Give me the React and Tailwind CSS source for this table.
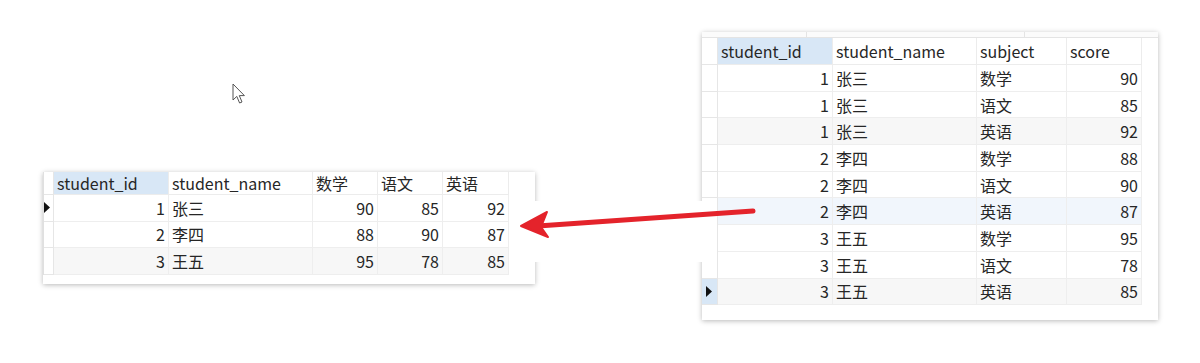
import React from "react";

const FONT = { fontFamily: '"Noto Sans CJK SC", "Noto Sans", sans-serif' };

function Tri() {
  return (
    <svg width="6" height="11" viewBox="0 0 6 11" className="block">
      <polygon points="0,0 6,5.5 0,11" fill="#111" />
    </svg>
  );
}

function Table({ cols, header, rows, headerH, rowH, indW, indPad, blueHeaderIdx, triRow, blueInd }) {
  const tmpl = [indW, ...cols.map((c) => c.w)].map((w) => w + "px").join(" ");
  return (
    <div className="grid" style={{ gridTemplateColumns: tmpl }}>
      <div className="border-r border-b border-[#e6e6e6] bg-white" style={{ height: headerH }} />
      {header.map((h, i) => (
        <div
          key={i}
          className={
            "flex items-center pl-[3px] border-r border-b border-[#ececec] " +
            (i === blueHeaderIdx ? "bg-[#d8e7f6]" : "bg-white")
          }
          style={{ height: headerH }}
        >
          {h}
        </div>
      ))}
      {rows.map((r, ri) => (
        <React.Fragment key={ri}>
          <div
            className={
              "flex items-center border-r border-b border-[#e6e6e6] " +
              (indPad ? "pl-[4px] " : "pl-0 ") +
              (ri === blueInd ? "bg-[#d8e7f6]" : "bg-white")
            }
            style={{ height: rowH }}
          >
            {ri === triRow ? <Tri /> : null}
          </div>
          {r.cells.map((c, ci) => (
            <div
              key={ci}
              className={
                "flex items-center border-r border-b border-[#eeeeee] " +
                (cols[ci].right ? "justify-end pr-[3px] " : "pl-[3px] ") +
                r.bg
              }
              style={{ height: rowH }}
            >
              {c}
            </div>
          ))}
        </React.Fragment>
      ))}
    </div>
  );
}

export default function App() {
  const leftCols = [
    { w: 115, right: true },
    { w: 144 },
    { w: 65, right: true },
    { w: 65, right: true },
    { w: 66, right: true },
  ];
  const leftRows = [
    { cells: ["1", "张三", "90", "85", "92"], bg: "bg-white" },
    { cells: ["2", "李四", "88", "90", "87"], bg: "bg-white" },
    { cells: ["3", "王五", "95", "78", "85"], bg: "bg-[#f7f7f7]" },
  ];
  const rightCols = [
    { w: 115, right: true },
    { w: 144 },
    { w: 90 },
    { w: 75, right: true },
  ];
  const rd = [
    ["1", "张三", "数学", "90", "bg-white"],
    ["1", "张三", "语文", "85", "bg-white"],
    ["1", "张三", "英语", "92", "bg-[#f7f7f7]"],
    ["2", "李四", "数学", "88", "bg-white"],
    ["2", "李四", "语文", "90", "bg-white"],
    ["2", "李四", "英语", "87", "bg-[#f1f6fc]"],
    ["3", "王五", "数学", "95", "bg-white"],
    ["3", "王五", "语文", "78", "bg-white"],
    ["3", "王五", "英语", "85", "bg-[#f7f7f7]"],
  ];
  const rightRows = rd.map((r) => ({ cells: r.slice(0, 4), bg: r[4] }));

  return (
    <div
      className="relative w-[1200px] h-[363px] bg-white overflow-hidden text-[16px] leading-none text-[#262626]"
      style={FONT}
    >
      <div className="flex items-start">
        {/* Left panel */}
        <div className="ml-[43px] mt-[172px] w-[492px] h-[112px] bg-white shadow-[0_1px_5px_rgba(0,0,0,0.28)]">
          <div className="border-l border-[#e0e0e0] w-fit">
            <Table
              cols={leftCols}
              header={["student_id", "student_name", "数学", "语文", "英语"]}
              rows={leftRows}
              headerH={23}
              rowH={26.5}
              indW={10}
              indPad={false}
              blueHeaderIdx={0}
              triRow={0}
              blueInd={-1}
            />
          </div>
        </div>

        {/* Right panel */}
        <div className="ml-[167px] mt-[32px] w-[456px] h-[288px] bg-white shadow-[0_1px_5px_rgba(0,0,0,0.28)]">
          <div className="flex h-[6px] border-b border-[#e4e4e4] bg-[#fbfbfb]">
            <div className="w-[105px] border-r border-[#e4e4e4]" />
            <div className="w-[218px] border-r border-[#e4e4e4]" />
          </div>
          <div className="w-fit">
            <Table
              cols={rightCols}
              header={["student_id", "student_name", "subject", "score"]}
              rows={rightRows}
              headerH={27}
              rowH={26.7}
              indW={16}
              indPad={true}
              blueHeaderIdx={0}
              triRow={8}
              blueInd={8}
            />
          </div>
        </div>
      </div>

      {/* white annotation backgrounds */}
      <div className="absolute left-[509px] top-[201px] w-[32px] h-[61px] bg-white" />
      <div className="absolute left-[690px] top-[201px] w-[27px] h-[61px] bg-white" />

      {/* arrow */}
      <svg className="absolute left-0 top-0" width="1200" height="363" viewBox="0 0 1200 363">
        <line x1="753" y1="211" x2="538" y2="226" stroke="#e4232b" strokeWidth="5" strokeLinecap="round" />
        <polygon points="521,226 547,212 541,227 548,237" fill="#e4232b" stroke="#e4232b" strokeWidth="2" strokeLinejoin="round" />
      </svg>

      {/* cursor */}
      <svg className="absolute left-[232px] top-[83px]" width="14" height="22" viewBox="0 0 14 22">
        <path
          d="M1 1 L1 17 L4.8 13.4 L7.6 20 L10 19 L7.3 12.6 L12.4 12.6 Z"
          fill="#ffffff"
          stroke="#555"
          strokeWidth="1"
          strokeLinejoin="round"
        />
      </svg>
    </div>
  );
}
